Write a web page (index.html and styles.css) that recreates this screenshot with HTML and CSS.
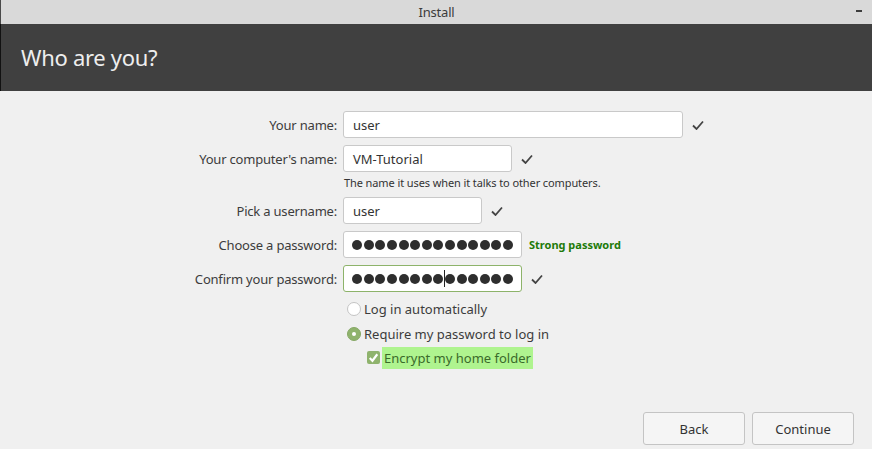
FILE: index.html
```html
<!DOCTYPE html>
<html>
<head>
<meta charset="utf-8">
<link rel="stylesheet" href="styles.css">
</head>
<body>
<div class="window">
  <div class="titlebar">
    <span class="title">Install</span>
    <span class="minimize"></span>
  </div>
  <div class="header">Who are you?</div>
  <div class="content">
    <div class="form">
      <div class="label">Your name:</div>
      <div class="field"><div class="input w-name">user</div><svg class="check" viewBox="0 0 12 10"><polyline points="1,5.5 4.5,9 11,1.5"/></svg></div>

      <div class="label">Your computer's name:</div>
      <div class="field"><div class="input w-comp">VM-Tutorial</div><svg class="check" viewBox="0 0 12 10"><polyline points="1,5.5 4.5,9 11,1.5"/></svg></div>

      <div class="label"></div>
      <div class="hint">The name it uses when it talks to other computers.</div>

      <div class="label">Pick a username:</div>
      <div class="field"><div class="input w-user">user</div><svg class="check" viewBox="0 0 12 10"><polyline points="1,5.5 4.5,9 11,1.5"/></svg></div>

      <div class="label">Choose a password:</div>
      <div class="field"><div class="input w-pass dots"><span class="dotrow"><i></i><i></i><i></i><i></i><i></i><i></i><i></i><i></i><i></i><i></i><i></i><i></i><i></i><i></i><i></i></span></div><span class="strong">Strong password</span></div>

      <div class="label">Confirm your password:</div>
      <div class="field"><div class="input w-pass dots ok"><span class="dotrow"><i></i><i></i><i></i><i></i><i></i><i></i><i></i><i></i><i></i><b class="caret"></b><i></i><i></i><i></i><i></i><i></i><i></i></span></div><svg class="check" viewBox="0 0 12 10"><polyline points="1,5.5 4.5,9 11,1.5"/></svg></div>

      <div class="label"></div>
      <div class="options">
        <div class="opt"><span class="radio"></span><span>Log in automatically</span></div>
        <div class="opt"><span class="radio on"></span><span>Require my password to log in</span></div>
        <div class="opt sub"><span class="cbox"><svg viewBox="0 0 12 12"><polyline points="2.5,6.5 5,9 9.5,3"/></svg></span><span class="hl">Encrypt my home folder</span></div>
      </div>
    </div>
    <div class="footer">
      <button class="btn">Back</button>
      <button class="btn">Continue</button>
    </div>
  </div>
</div>
</body>
</html>
```
FILE: styles.css
```css
html, body {
  margin: 0;
  padding: 0;
}
body {
  width: 872px;
  height: 449px;
  overflow: hidden;
  background: #f0f0f0;
  font-family: "Noto Sans", "Open Sans", sans-serif;
  font-size: 13px;
  color: #3c3c3c;
}
.window {
  display: flex;
  flex-direction: column;
  height: 449px;
}
.titlebar {
  height: 24px;
  flex: none;
  background: #d9d9d9;
  border-left: 1px solid #4a4a4a;
  display: flex;
  align-items: center;
  justify-content: center;
  position: relative;
}
.title {
  font-size: 13px;
  color: #3c3c3c;
  letter-spacing: -0.2px;
}
.minimize {
  position: absolute;
  left: 855px;
  top: 10px;
  width: 6px;
  height: 2px;
  background: #3c3c3c;
}
.header {
  height: 67px;
  flex: none;
  background: #404040;
  border-left: 1px solid #111;
  color: #eeeeee;
  font-size: 22px;
  padding-left: 20px;
  display: flex;
  align-items: center;
  letter-spacing: -0.3px;
  box-sizing: border-box;
  padding-bottom: 2px;
}
.content {
  flex: 1;
  display: flex;
  flex-direction: column;
}
.form {
  display: grid;
  grid-template-columns: 337px auto;
  column-gap: 6px;
  row-gap: 7px;
  align-items: center;
  padding-top: 20px;
}
.label {
  text-align: right;
  letter-spacing: -0.2px;
}
.field {
  display: flex;
  align-items: center;
  height: 27px;
}
.input {
  box-sizing: border-box;
  height: 27px;
  background: #ffffff;
  border: 1px solid #c9c9c9;
  border-radius: 3px;
  padding: 0 9px;
  display: flex;
  align-items: center;
  color: #333;
  font-size: 13px;
}
.w-name { width: 340px; }
.w-comp { width: 169px; }
.w-user { width: 139px; }
.w-pass { width: 179px; }
.check {
  width: 12px;
  height: 10px;
  margin-left: 9px;
  fill: none;
  stroke: #444;
  stroke-width: 1.8;
}
.input.dots {
  padding: 0 8px 0 8px;
}
.dotrow {
  flex: 1;
  display: flex;
  align-items: center;
  justify-content: flex-end;
  overflow: hidden;
  gap: 1.6px;
  height: 20px;
}
.dotrow i {
  flex: none;
  width: 10px;
  height: 10px;
  border-radius: 50%;
  background: #2e2e2e;
}
.dotrow .caret {
  flex: none;
  width: 1px;
  height: 17px;
  background: #222;
  margin: 0 -1.3px;
}
.input.ok {
  border-color: #8db36a;
}
.strong {
  margin-left: 7px;
  color: #217a08;
  font-weight: bold;
  font-size: 11px;
}
.hint {
  font-size: 11px;
  color: #333;
  margin-top: -3px;
  height: 14px;
  line-height: 14px;
  padding-left: 1px;
  letter-spacing: -0.1px;
}
.options {
  display: flex;
  flex-direction: column;
  margin-top: -3px;
}
.opt {
  display: flex;
  align-items: center;
  height: 25px;
  gap: 3px;
  padding-left: 4px;
}
.radio {
  box-sizing: border-box;
  width: 14px;
  height: 14px;
  border-radius: 50%;
  background: #fff;
  border: 1px solid #c4c4c4;
  display: inline-flex;
  align-items: center;
  justify-content: center;
}
.radio.on {
  background: #8fb36d;
  border-color: #86a865;
}
.radio.on::after {
  content: "";
  width: 4px;
  height: 4px;
  border-radius: 50%;
  background: #fff;
}
.sub {
  padding-left: 24px;
  height: 23px;
  gap: 2px;
}
.cbox {
  width: 13px;
  height: 13px;
  border-radius: 2px;
  background: #8fb36d;
  display: inline-flex;
}
.cbox svg {
  width: 13px;
  height: 13px;
  fill: none;
  stroke: #fff;
  stroke-width: 2;
}
.hl {
  background: #aff48f;
  color: #3a6a2a;
  height: 22px;
  line-height: 22px;
  padding: 0 2px 0 2px;
}
.footer {
  margin-top: auto;
  display: flex;
  justify-content: flex-end;
  gap: 7px;
  padding: 0 18px 4px 0;
}
.btn {
  box-sizing: border-box;
  width: 102px;
  height: 33px;
  background: #f5f5f5;
  border: 1px solid #c4c4c4;
  border-radius: 3px;
  font-family: "Noto Sans", "Open Sans", sans-serif;
  font-size: 13px;
  color: #333;
}
```
